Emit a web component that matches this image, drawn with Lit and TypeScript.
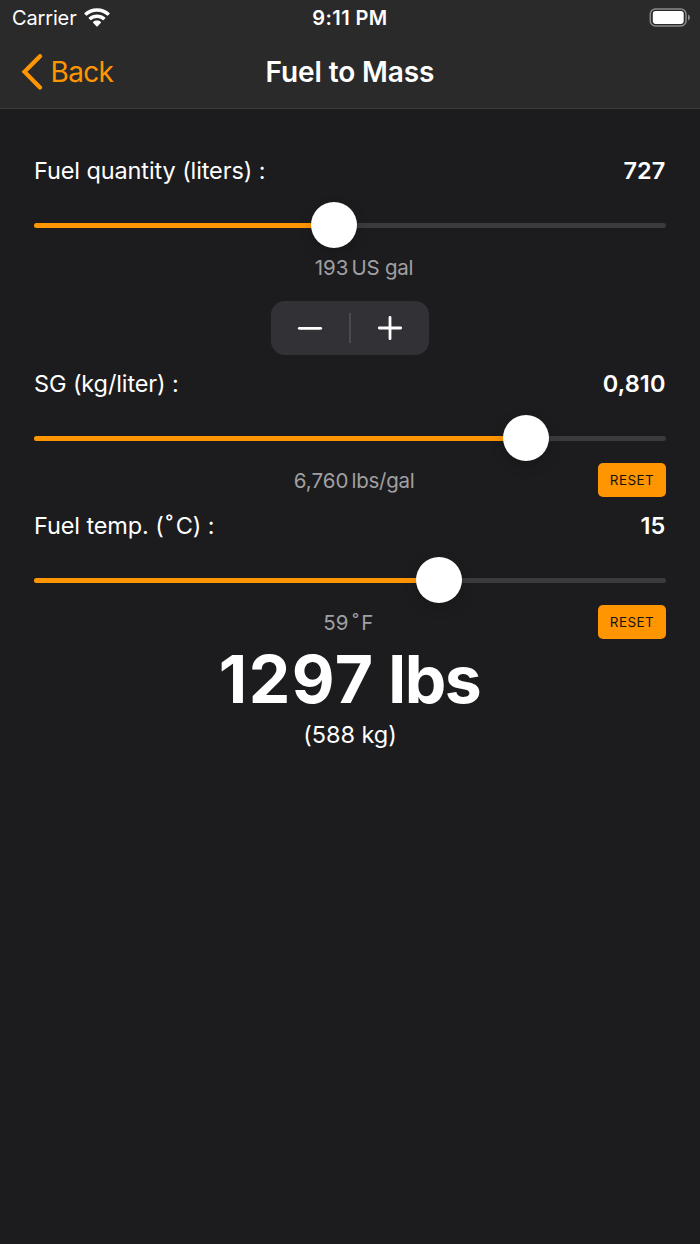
import { LitElement, html, css, nothing } from "lit";
import { customElement, property } from "lit/decorators.js";

@customElement("status-bar")
class StatusBar extends LitElement {
  static styles = css`
    :host { display: grid; grid-template-columns: 1fr auto 1fr; align-items: center; height: 36px; padding: 0 10px 0 12px; font-size: 20px; }
    .left { display: flex; align-items: center; gap: 7px; letter-spacing: -0.15px; }
    .time { font-weight: 600; letter-spacing: 0.4px; font-size: 20px; margin-right: 2px; }
    .right { display: flex; justify-content: flex-end; }
    svg { display: block; }
  `;
  render() {
    return html`
      <div class="left">
        <span>Carrier</span>
        <svg width="26" height="20" viewBox="0 0 26 20" fill="#fff">
          <path d="M13 .2C8 .2 3.600 2 .5 5.100q-.4.4 0 .8l1.600 1.700q.4.4.8 0C5.600 5 9.100 3.700 13 3.700s7.400 1.300 10.100 3.900q.4.4.8 0l1.600-1.700q.4-.4 0-.8C22.400 2 18 .2 13 .2z"/>
          <path d="M13 6.400c-3.200 0-6.100 1.200-8.200 3.200q-.4.4 0 .8l1.700 1.700q.4.4.8 0c1.500-1.400 3.500-2.200 5.700-2.200s4.200.8 5.700 2.200q.4.4.8 0l1.700-1.700q.4-.4 0-.8C19.100 7.600 16.200 6.400 13 6.400z"/>
          <path d="M13 12.600c-1.500 0-2.900.5-3.900 1.400q-.4.4 0 .8l3.500 3.600q.4.4.8 0l3.500-3.600q.4-.4 0-.8c-1-.9-2.400-1.400-3.900-1.400z"/>
        </svg>
      </div>
      <span class="time">9:11 PM</span>
      <div class="right">
        <svg width="41" height="20" viewBox="0 0 41 20">
          <rect x="1.300" y=".9" width="35.700" height="17.200" rx="5.200" fill="none" stroke="#8b8b8b" stroke-width="1.500"/>
          <rect x="3.800" y="3.100" width="30.900" height="12.800" rx="2.800" fill="#fff"/>
          <path d="M39 6.600q2 .9 2 2.900t-2 2.900z" fill="#8b8b8b"/>
        </svg>
      </div>`;
  }
}

@customElement("nav-bar")
class NavBar extends LitElement {
  static styles = css`
    :host { display: grid; grid-template-columns: 1fr auto 1fr; align-items: center; height: 71px; padding: 0 21px 1px; font-size: 28px; line-height: 34px; }
    .back { display: flex; align-items: center; gap: 6.500px; color: #ff9500; letter-spacing: -0.65px; }
    .title { font-weight: 600; font-size: 28px; letter-spacing: -0.1px; }
    svg { display: block; }
  `;
  render() {
    return html`
      <div class="back">
        <svg width="23" height="36" viewBox="0 0 23 36" fill="none" stroke="#ff9500" stroke-width="4.200" stroke-linecap="round" stroke-linejoin="miter"><path d="M19 2.200 3.500 17.800 19 33.400"/></svg>
        <span>Back</span>
      </div>
      <span class="title">Fuel to Mass</span>`;
  }
}

@customElement("value-slider")
class ValueSlider extends LitElement {
  @property() label = "";
  @property() value = "";
  @property() amount = "";
  @property() unit = "";
  @property({ type: Number }) position = 0;
  @property({ type: Boolean }) resettable = false;
  static styles = css`
    :host { display: block; }
    .row { display: flex; justify-content: space-between; align-items: center; box-sizing: border-box; height: 34px; padding: 0 0.500px 2px 0; font-size: 23.500px; }
    .label { letter-spacing: -0.11px; }
    .degree { margin: 0 3px 0 2px; }
    .value { font-weight: 600; letter-spacing: 0.1px; }
    .slider { display: flex; align-items: center; height: 62px; }
    .track { position: relative; width: 100%; height: 5px; margin-top: 13px; border-radius: 3px; background: #3b3b3e; }
    .fill { height: 100%; border-radius: 3px; background: #ff9500; }
    .knob { position: absolute; top: -21.400px; width: 46px; height: 46px; margin-left: -23px; border-radius: 50%; background: #fff; box-shadow: 0 5px 14px rgba(0, 0, 0, 0.16); }
    .hint { display: grid; grid-template-columns: 1fr 67px 1fr; align-items: center; height: 34px; }
    .pair { grid-column: 1 / -1; grid-row: 1; display: grid; grid-template-columns: 1fr 1fr; gap: 3px; font-size: 20.500px; color: #a0a0a2; }
    .amount { text-align: right; letter-spacing: 0.05px; }
    .unit { letter-spacing: -0.25px; }
    .unit .degree { margin: 0 3px 0 1px; }
    .reset { grid-column: 3; grid-row: 1; justify-self: end; width: 68px; height: 34px; padding: 0; border: 0; border-radius: 5px; background: #ff9500; color: #16140f; font: 400 13.500px Inter, sans-serif; letter-spacing: 0.4px; }
  `;
  private degrees(text: string) {
    const [before, after] = text.split("˚");
    return after === undefined ? text : html`${before}<span class="degree">˚</span>${after}`;
  }
  render() {
    return html`
      <div class="row"><span class="label">${this.degrees(this.label)}</span><span class="value">${this.value}</span></div>
      <div class="slider">
        <div class="track">
          <div class="fill" style="width:${this.position}%"></div>
          <div class="knob" style="left:${this.position}%"></div>
        </div>
      </div>
      <div class="hint">
        <div class="pair"><span class="amount">${this.amount}</span><span class="unit">${this.degrees(this.unit)}</span></div>
        ${this.resettable ? html`<button class="reset">RESET</button>` : nothing}
      </div>`;
  }
}

@customElement("quantity-stepper")
class QuantityStepper extends LitElement {
  static styles = css`
    :host { display: grid; grid-template-columns: 1fr 2px 1fr; align-items: center; justify-items: center; width: 158.500px; height: 54px; border-radius: 14px; background: #323136; }
    .divider { width: 2px; height: 30px; background: #4b4a4f; }
    svg { display: block; }
  `;
  render() {
    return html`
      <svg width="26" height="26" viewBox="0 0 26 26" stroke="#fff" stroke-width="2.800" stroke-linecap="round"><path d="M2.300 13.300H23.700"/></svg>
      <div class="divider"></div>
      <svg width="26" height="26" viewBox="0 0 26 26" stroke="#fff" stroke-width="2.800" stroke-linecap="round"><path d="M2.300 13H23.700M13 2.300V23.700"/></svg>`;
  }
}

@customElement("app-root")
class AppRoot extends LitElement {
  static styles = css`
    :host { display: block; min-height: 1244px; background: #1c1c1e; color: #fff; font-family: Inter, sans-serif; white-space: nowrap; }
    header { background: #2a2a2a; border-bottom: 1px solid #3a3a3b; }
    main { display: flex; flex-direction: column; padding: 45px 34px 0; }
    quantity-stepper { align-self: center; margin: 17px 0 12px; }
    .spaced { margin-top: 12px; }
    .result { display: flex; flex-direction: column; align-items: center; }
    .mass { font-size: 66px; font-weight: 700; line-height: 80px; word-spacing: -2px; margin-right: 1px; }
    .number { letter-spacing: 1.500px; }
    .unit { letter-spacing: -1.500px; }
    .metric { font-size: 23.500px; line-height: 30px; letter-spacing: -0.05px; padding-top: 1px; }
  `;
  render() {
    return html`
      <header><status-bar></status-bar><nav-bar></nav-bar></header>
      <main>
        <value-slider label="Fuel quantity (liters) :" value="727" amount="193" unit="US gal" .position=${47.45}></value-slider>
        <quantity-stepper></quantity-stepper>
        <value-slider label="SG (kg/liter) :" value="0,810" amount="6,760" unit="lbs/gal" .position=${77.92} resettable></value-slider>
        <value-slider class="spaced" label="Fuel temp. (˚C) :" value="15" amount="59" unit="˚F" .position=${64.03} resettable></value-slider>
        <section class="result">
          <div class="mass"><span class="number">1297</span> <span class="unit">lbs</span></div>
          <div class="metric">(588 kg)</div>
        </section>
      </main>`;
  }
}
